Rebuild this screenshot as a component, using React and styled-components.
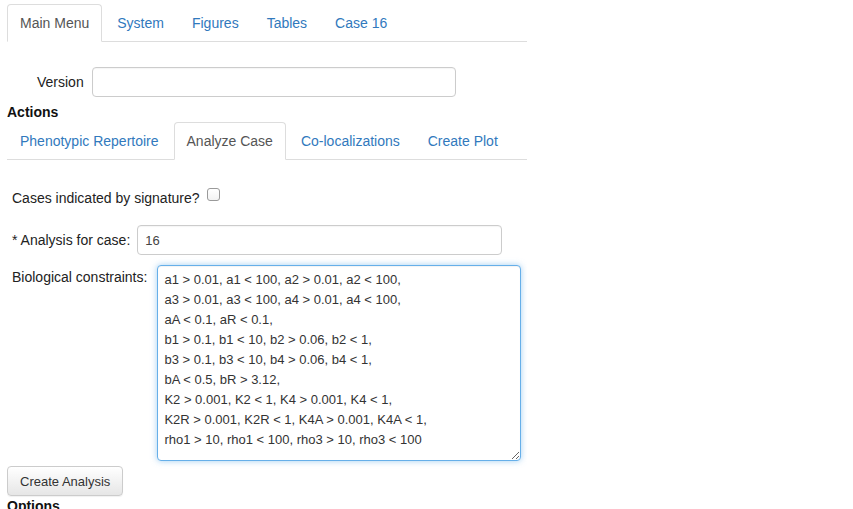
import React from "react";
import styled, { createGlobalStyle } from "styled-components";

const Global = createGlobalStyle`
  html, body { margin: 0; padding: 0; background: #fff; }
  body {
    font-family: "Liberation Sans", Arial, Helvetica, sans-serif;
    font-size: 14px;
    line-height: 20px;
    color: #333;
  }
  * { box-sizing: border-box; }
`;

const Page = styled.div`
  width: 520px;
  margin-left: 7px;
  padding-top: 4px;
  height: 509px;
  overflow: hidden;
`;

const Tabs = styled.ul`
  display: flex;
  list-style: none;
  margin: 0;
  padding: 0;
  border-bottom: 1px solid #ddd;
`;

const Tab = styled.li`
  margin-right: 2px;
  margin-bottom: -1px;
  padding: 8px 12px;
  line-height: 20px;
  font-size: 14px;
  border: 1px solid ${(p) => (p.$active ? "#ddd" : "transparent")};
  border-bottom-color: ${(p) => (p.$active ? "#fff" : "transparent")};
  border-radius: 4px 4px 0 0;
  background: ${(p) => (p.$active ? "#fff" : "transparent")};
  color: ${(p) => (p.$active ? "#555" : "#3179bd")};
  cursor: pointer;
`;

const VersionRow = styled.div`
  display: flex;
  align-items: center;
  gap: 8px;
  margin-top: 25px;
  padding-left: 30px;
`;

const Label = styled.label`
  color: #222;
  white-space: nowrap;
  padding-top: ${(p) => p.$top || 0}px;
`;

const Input = styled.input`
  width: ${(p) => p.$w}px;
  height: 30px;
  padding: 4px 7px;
  border: 1px solid #ccc;
  border-radius: 4px;
  font-family: "Liberation Sans", Arial, sans-serif;
  font-size: 13px;
  color: #444;
  box-shadow: inset 0 1px 1px rgba(0, 0, 0, 0.04);
  outline: none;
`;

const Heading = styled.div`
  font-weight: bold;
  color: #111;
  margin-top: ${(p) => p.$mt || 0}px;
  margin-left: ${(p) => p.$ml || 0}px;
  line-height: 20px;
`;

const Form = styled.div`
  padding-left: 5px;
  display: flex;
  flex-direction: column;
`;

const Row = styled.div`
  display: flex;
  align-items: ${(p) => p.$align || "center"};
  gap: ${(p) => p.$gap || 7}px;
  margin-top: ${(p) => p.$mt}px;
`;

const Check = styled.span`
  display: inline-block;
  width: 13px;
  height: 13px;
  border: 1px solid #9a9a9a;
  border-radius: 3px;
  background: linear-gradient(#fff, #f2f2f2);
  margin-top: -8px;
`;

const Area = styled.textarea`
  width: 364px;
  height: 196px;
  padding: 4px 6px;
  border: 1px solid #66afe9;
  border-radius: 4px;
  box-shadow: inset 0 1px 1px rgba(0, 0, 0, 0.05), 0 0 6px rgba(102, 175, 233, 0.6);
  font-family: "Liberation Sans", Arial, sans-serif;
  font-size: 13px;
  line-height: 20px;
  color: #333;
  outline: none;
  resize: both;
`;

const Button = styled.button`
  align-self: flex-start;
  margin-top: 5px;
  margin-left: -5px;
  height: 30px;
  padding: 0 12px;
  border: 1px solid #ccc;
  border-radius: 4px;
  background: linear-gradient(#fff, #e6e6e6);
  font-family: "Liberation Sans", Arial, sans-serif;
  font-size: 13px;
  color: #333;
  box-shadow: 0 1px 1px rgba(0, 0, 0, 0.06);
`;

const text = `a1 > 0.01, a1 < 100, a2 > 0.01, a2 < 100,
a3 > 0.01, a3 < 100, a4 > 0.01, a4 < 100,
aA < 0.1, aR < 0.1,
b1 > 0.1, b1 < 10, b2 > 0.06, b2 < 1,
b3 > 0.1, b3 < 10, b4 > 0.06, b4 < 1,
bA < 0.5, bR > 3.12,
K2 > 0.001, K2 < 1, K4 > 0.001, K4 < 1,
K2R > 0.001, K2R < 1, K4A > 0.001, K4A < 1,
rho1 > 10, rho1 < 100, rho3 > 10, rho3 < 100`;

export default function App() {
  return (
    <>
      <Global />
      <Page>
        <Tabs>
          <Tab $active>Main Menu</Tab>
          <Tab>System</Tab>
          <Tab>Figures</Tab>
          <Tab>Tables</Tab>
          <Tab>Case 16</Tab>
        </Tabs>
        <VersionRow>
          <Label>Version</Label>
          <Input $w={364} defaultValue="" />
        </VersionRow>
        <Heading $mt={5}>Actions</Heading>
        <Tabs>
          <Tab>Phenotypic Repertoire</Tab>
          <Tab $active>Analyze Case</Tab>
          <Tab>Co-localizations</Tab>
          <Tab>Create Plot</Tab>
        </Tabs>
        <Form>
          <Row $mt={28}>
            <Label>Cases indicated by signature?</Label>
            <Check />
          </Row>
          <Row $mt={17}>
            <Label>* Analysis for case:</Label>
            <Input $w={365} defaultValue="16" />
          </Row>
          <Row $mt={10} $align="flex-start" $gap={10}>
            <Label $top={2}>Biological constraints:</Label>
            <Area readOnly defaultValue={text} />
          </Row>
          <Button>Create Analysis</Button>
          <Heading $mt={0} $ml={-5}>Options</Heading>
        </Form>
      </Page>
    </>
  );
}
